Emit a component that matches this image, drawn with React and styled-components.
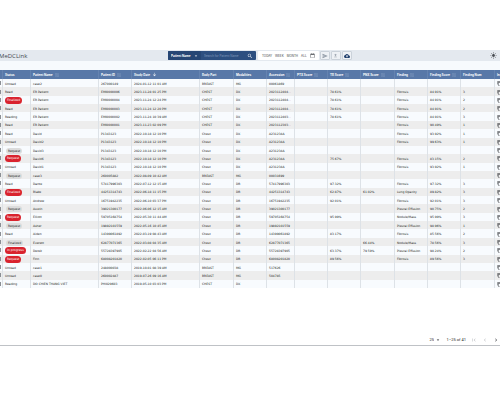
import React, { useState } from 'react'
import styled, { createGlobalStyle } from 'styled-components'
import {
  MdArrowDownward,
  MdArrowDropDown,
  MdCalendarToday,
  MdChevronLeft,
  MdChevronRight,
  MdCloudUpload,
  MdContentCopy,
  MdFirstPage,
  MdLightMode,
  MdSearch,
  MdSend,
  MdUpload,
} from 'react-icons/md'

const fontFamilyBase = 'Inter, "Liberation Sans", sans-serif'
const fontFamilyData = '"DejaVu Sans", sans-serif'

const GlobalStyle = createGlobalStyle`
  * {
    box-sizing: border-box;
  }

  body {
    margin: 0;
    background: #fff;
    font-family: ${fontFamilyBase};
    font-size: 3px;
    line-height: 4px;
    color: #1c1e22;
    overflow: hidden;
  }

  button, input, select {
    margin: 0;
    padding: 0;
    border: 0;
    background: none;
    font: inherit;
    color: inherit;
    appearance: none;
    outline: none;
  }

  svg {
    display: block;
    flex: none;
  }
`

const Page = styled.main`
  padding-top: 50px;
`

const TopBar = styled.header`
  display: grid;
  grid-template-columns: 168px 1fr auto;
  align-items: center;
  height: 11px;
  padding-right: 3px;
  background: #e4e9ef;
`

const Brand = styled.h1`
  margin: 0 0 0 -1px;
  font-family: "Open Sans", sans-serif;
  font-size: 6px;
  font-weight: 400;
  line-height: 8px;
  color: #44494f;
`

const Tools = styled.div`
  display: flex;
  align-items: center;
  gap: 1px;
`

const SearchBox = styled.form`
  display: flex;
  align-items: center;
  width: 88px;
  height: 9px;
  margin-right: 1px;
  padding-right: 3px;
  border-radius: 1px;
  background: #2d4f80;
  color: #fff;
`

const FieldPicker = styled.label`
  display: flex;
  align-items: center;
  width: 33px;
  height: 9px;
  padding-left: 3px;
  border-radius: 1px;
  background: #264674;
  font-weight: 700;

  select {
    width: 22px;
  }
`

const SearchInput = styled.input`
  flex: 1;
  min-width: 0;
  height: 7px;
  padding-left: 3px;

  &::placeholder {
    color: #8299bb;
    opacity: 1;
  }
`

const RangeGroup = styled.div`
  display: flex;
  align-items: center;
  gap: 3px;
  height: 9px;
  padding: 0 4px;
  border-radius: 1px;
  background: #fff;
  color: #3b3f45;
`

const IconButton = styled.button`
  display: flex;
  align-items: center;
  justify-content: center;
  color: ${props => props.color || 'inherit'};
`

const ToolButton = styled(IconButton)`
  width: 10px;
  height: 9px;
  border: 1px solid #cbd2da;
  border-radius: 1px;
  background: #eef1f5;
`

const Content = styled.section`
  padding-top: 9px;
  background: #f7fafd;
`

const Card = styled.div`
  border-bottom: 1px solid #bfc2c6;
  background: #fff;
`

const Table = styled.table`
  width: 100%;
  height: 218px;
  table-layout: fixed;
  border-collapse: separate;
  border-spacing: 0;
`

const Col = styled.col`
  width: ${props => props.$width ? `${props.$width}px` : 'auto'};
`

const HeadRow = styled.tr`
  height: 9px;
  background: #5878a8;
  color: #fff;
`

const HeadCell = styled.th`
  padding: 0 0 0 2px;
  border-left: 1px solid #6583b0;
  font-weight: 700;
  text-align: left;
  white-space: nowrap;
  overflow: hidden;
`

const SortButton = styled.button`
  display: flex;
  align-items: center;
  gap: 2px;
`

const SortMark = styled.svg`
  width: 4px;
  height: 4px;
  stroke: #90a8cb;
  fill: none;
`

const Row = styled.tr`
  height: 8px;
  background: #f8fbfe;

  &:nth-child(even) {
    background: #ededed;
  }
`

const Cell = styled.td`
  padding: 1px 0 0 2px;
  border-left: 1px solid #dde2e7;
  font-family: ${fontFamilyData};
  white-space: nowrap;
  overflow: hidden;
`

const CheckCell = styled.td`
  padding: 0;
  overflow: hidden;
`

const Check = styled.input`
  display: block;
  width: 4px;
  height: 4px;
  margin-left: -3px;
  border: 1px solid #8b8f94;
`

const Chip = styled.span`
  display: block;
  width: fit-content;
  height: ${props => props.$urgent ? '7px' : '6px'};
  margin-left: ${props => props.$urgent ? '0' : '1px'};
  padding: 0 2px;
  border-radius: 4px;
  background: ${props => props.$urgent ? '#d9232e' : '#dcdcdc'};
  color: ${props => props.$urgent ? '#fff' : '#1c1e22'};
  line-height: ${props => props.$urgent ? '7px' : '6px'};
`

const Pager = styled.nav`
  display: flex;
  align-items: center;
  justify-content: flex-end;
  gap: 5px;
  height: 11px;
  margin-top: 46px;
  padding-right: 1px;
  font-family: Roboto, sans-serif;
  font-size: 4px;
`

const PageSize = styled.label`
  display: flex;
  align-items: center;
  gap: 1px;

  select {
    width: 5px;
  }
`

const columns = [
  { label: 'Status', width: 28 },
  { label: 'Patient Name', width: 68, sort: true },
  { label: 'Patient ID', width: 33, sort: true },
  { label: 'Study Date', width: 68, sort: 'desc' },
  { label: 'Body Part', width: 34 },
  { label: 'Modalities', width: 33 },
  { label: 'Accession', width: 28, sort: true },
  { label: 'PTX Score', width: 33, sort: true },
  { label: 'TB Score', width: 33, sort: true },
  { label: 'PNX Score', width: 34, sort: true },
  { label: 'Finding', width: 33, sort: true },
  { label: 'Finding Score', width: 33, sort: true },
  { label: 'Finding Num', width: 34 },
  { label: 'Ins' },
]

// status, name, id, date, body part, modality, accession, ptx, tb, pnx, finding, score, count
// a leading "!" marks an urgent status, "~" a plain chip
const studies = [
  ['Unread', 'case2', '267000149', '2024-01-12 11:01 AM', 'BREAST', 'MG', '00061869', '', '', '', '', '', ''],
  ['Read', 'ER Patient', 'EMI0000006', '2023-11-28 01:25 PM', 'CHEST', 'DX', '2023112404...', '', '78.61%', '', 'Fibrosis', '84.91%', '3'],
  ['!Finalized', 'ER Patient', 'EMI0000004', '2023-11-24 12:24 PM', 'CHEST', 'DX', '2023112404...', '', '78.61%', '', 'Fibrosis', '84.91%', '2'],
  ['Read', 'ER Patient', 'EMI0000003', '2023-11-24 12:20 PM', 'CHEST', 'DX', '2023112404...', '', '78.61%', '', 'Fibrosis', '84.91%', '2'],
  ['Reading', 'ER Patient', 'EMI0000002', '2023-11-24 10:39 AM', 'CHEST', 'DX', '2023112403...', '', '78.61%', '', 'Fibrosis', '84.91%', '3'],
  ['Read', 'ER Patient', 'EMI0000001', '2023-11-23 02:09 PM', 'CHEST', 'DX', '2023112303...', '', '', '', 'Fibrosis', '90.49%', '1'],
  ['Read', 'David', 'P1343123', '2022-10-18 12:10 PM', 'Chest', 'DX', 'A231234A', '', '', '', 'Fibrosis', '93.92%', '1'],
  ['Unread', 'David2', 'P1343123', '2022-10-18 12:10 PM', 'Chest', 'DX', 'A231234A', '', '', '', 'Fibrosis', '99.63%', '1'],
  ['~Request', 'David3', 'P1343123', '2022-10-18 12:10 PM', 'Chest', 'DX', 'A231234A', '', '', '', '', '', ''],
  ['!Request', 'David6', 'P1343123', '2022-10-18 12:10 PM', 'Chest', 'DX', 'A231234A', '', '75.67%', '', 'Fibrosis', '83.15%', '2'],
  ['Unread', 'David1', 'P1343123', '2022-10-18 12:10 PM', 'Chest', 'DX', 'A231234A', '', '', '', 'Fibrosis', '93.92%', '1'],
  ['~Request', 'case3', '260005882', '2022-08-09 10:42 AM', 'BREAST', 'MG', '00031699', '', '', '', '', '', ''],
  ['Read', 'Dante', '57417996303', '2022-07-12 12:15 AM', 'Chest', 'DR', '57417996303', '', '97.32%', '', 'Fibrosis', '97.32%', '3'],
  ['!Finalized', 'Blake', '44251314743', '2022-06-18 11:15 PM', 'Chest', 'DR', '44251314743', '', '62.87%', '61.02%', 'Lung Opacity', '89.82%', '3'],
  ['Unread', 'Andrew', '16751942235', '2022-06-10 03:37 PM', 'Chest', 'DR', '16751942235', '', '92.01%', '', 'Fibrosis', '92.01%', '3'],
  ['~Request', 'Austin', '39021300177', '2022-06-06 12:15 AM', 'Chest', 'DR', '39021300177', '', '', '', 'Pleural Effusion', '90.75%', '2'],
  ['!Request', 'Elliott', '59705168754', '2022-05-30 11:44 AM', 'Chest', 'DR', '59705168754', '', '95.99%', '', 'Nodule/Mass', '95.99%', '3'],
  ['~Request', 'Asher', '19892101559', '2022-05-16 10:45 AM', 'Chest', 'DR', '19892101559', '', '', '', 'Pleural Effusion', '98.96%', '1'],
  ['Read', 'Aiden', '14399061892', '2022-03-19 08:43 AM', 'Chest', 'DR', '14399061892', '', '83.17%', '', 'Fibrosis', '85.56%', '2'],
  ['~Finalized', 'Everett', '62877071365', '2022-03-08 04:35 AM', 'Chest', 'DR', '62877071365', '', '', '66.44%', 'Nodule/Mass', '78.56%', '3'],
  ['!In progress', 'Derek', '55728397905', '2022-02-22 04:56 AM', 'Chest', 'DR', '55728397905', '', '63.37%', '79.59%', 'Pleural Effusion', '98.24%', '2'],
  ['!Request', 'Finn', '68008201820', '2022-02-05 06:11 PM', 'Chest', 'DR', '68008201820', '', '89.56%', '', 'Fibrosis', '89.56%', '3'],
  ['Unread', 'case1', '248000038', '2019-10-01 08:39 AM', 'BREAST', 'MG', '517626', '', '', '', '', '', ''],
  ['Unread', 'case0', '260002487', '2019-07-26 09:16 AM', 'BREAST', 'MG', '504785', '', '', '', '', '', ''],
  ['Reading', 'DO CHIEN THANG VIET', 'PHI029603', '2019-05-10 03:03 PM', 'CHEST', 'DX', '', '', '', '', '', '', ''],
]

const Status = ({ value }) => {
  if (value[0] === '!') { return <Chip $urgent>{value.slice(1)}</Chip> }
  if (value[0] === '~') { return <Chip>{value.slice(1)}</Chip> }
  return value
}

const SortIcon = ({ sort }) => sort === 'desc'
  ? <MdArrowDownward size={5} />
  : (
    <SortMark viewBox="0 0 8 8">
      <path d="M2 8V1M0.5 2.5L2 1l1.5 1.5M6 0v7M4.5 5.5L6 7l1.5-1.5" />
    </SortMark>
  )

const App = () => {
  const [query, setQuery] = useState('')

  return (
    <Page>
      <GlobalStyle />
      <TopBar>
        <Brand>MeDCLink</Brand>
        <Tools>
          <SearchBox onSubmit={e => e.preventDefault()}>
            <FieldPicker>
              <select aria-label="Search field">
                <option>Patient Name</option>
              </select>
              <MdArrowDropDown size={6} />
            </FieldPicker>
            <SearchInput
              aria-label="Search"
              placeholder="Search for Patient Name"
              value={query}
              onChange={e => setQuery(e.target.value)}
            />
            <IconButton aria-label="Search"><MdSearch size={6} /></IconButton>
          </SearchBox>
          <RangeGroup>
            <button>TODAY</button>
            <button>WEEK</button>
            <button>MONTH</button>
            <button>ALL</button>
            <IconButton aria-label="Pick dates"><MdCalendarToday size={5} /></IconButton>
          </RangeGroup>
          <ToolButton aria-label="Send" color="#8d97a3"><MdSend size={6} /></ToolButton>
          <ToolButton aria-label="Export" color="#a3abb5"><MdUpload size={5} /></ToolButton>
          <ToolButton aria-label="Upload" color="#203f6c"><MdCloudUpload size={6} /></ToolButton>
        </Tools>
        <IconButton aria-label="Theme" color="#4a4e54"><MdLightMode size={7} /></IconButton>
      </TopBar>
      <Content>
        <Card>
          <Table>
            <colgroup>
              <Col $width={2} />
              {columns.map(column => <Col key={column.label} $width={column.width} />)}
            </colgroup>
            <thead>
              <HeadRow>
                <CheckCell />
                {columns.map(column =>
                  <HeadCell key={column.label}>
                    {column.sort
                      ? <SortButton>{column.label}<SortIcon sort={column.sort} /></SortButton>
                      : column.label
                    }
                  </HeadCell>
                )}
              </HeadRow>
            </thead>
            <tbody>
              {studies.map(([status, ...values], i) =>
                <Row key={`study-${i}`}>
                  <CheckCell><Check type="checkbox" aria-label={`Select ${values[0]}`} /></CheckCell>
                  <Cell><Status value={status} /></Cell>
                  {values.map((value, j) => <Cell key={j}>{value}</Cell>)}
                  <Cell>
                    <IconButton aria-label="Copy"><MdContentCopy size={5} /></IconButton>
                  </Cell>
                </Row>
              )}
            </tbody>
          </Table>
          <Pager>
            <PageSize>
              <select aria-label="Rows per page">
                <option>25</option>
              </select>
              <MdArrowDropDown size={6} />
            </PageSize>
            <span>1–25 of 41</span>
            <IconButton aria-label="First page" color="#b5b8bc"><MdFirstPage size={6} /></IconButton>
            <IconButton aria-label="Previous page" color="#b5b8bc"><MdChevronLeft size={6} /></IconButton>
            <IconButton aria-label="Next page"><MdChevronRight size={6} /></IconButton>
          </Pager>
        </Card>
      </Content>
    </Page>
  )
}

export default App
